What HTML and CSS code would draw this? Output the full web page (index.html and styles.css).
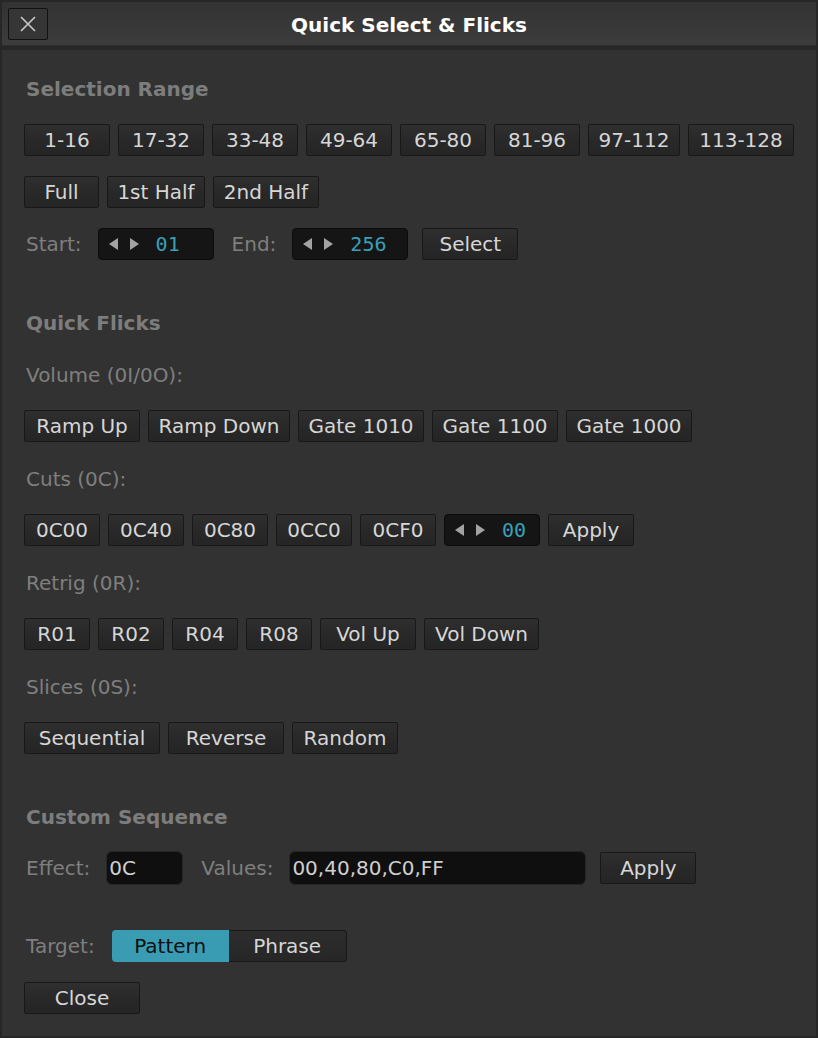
FILE: index.html
```html
<!DOCTYPE html>
<html lang="en">
<head>
    <meta charset="UTF-8">
    <title>Quick Select &amp; Flicks</title>
    <link rel="stylesheet" href="styles.css">
</head>
<body>
    <div class="window">
        <header class="titlebar">
            <button class="close-btn" title="Close">
                <svg width="16" height="16" viewBox="0 0 16 16"><path d="M1 1L15 15M15 1L1 15" stroke="#c8c8c8" stroke-width="1.6" fill="none"/></svg>
            </button>
            <h1>Quick Select &amp; Flicks</h1>
        </header>

        <main class="panel">
            <h2 class="section-title first">Selection Range</h2>
            <div class="row">
                <button class="btn w86">1-16</button>
                <button class="btn w86">17-32</button>
                <button class="btn w86">33-48</button>
                <button class="btn w86">49-64</button>
                <button class="btn w86">65-80</button>
                <button class="btn w86">81-96</button>
                <button class="btn w92">97-112</button>
                <button class="btn w106">113-128</button>
            </div>
            <div class="row">
                <button class="btn w75">Full</button>
                <button class="btn w98">1st Half</button>
                <button class="btn w106">2nd Half</button>
            </div>
            <div class="row form-row">
                <span class="label">Start:</span>
                <div class="spin w116">
                    <span class="arrow left"></span><span class="arrow right"></span>
                    <span class="spin-value">01</span>
                </div>
                <span class="label">End:</span>
                <div class="spin w116">
                    <span class="arrow left"></span><span class="arrow right"></span>
                    <span class="spin-value">256</span>
                </div>
                <button class="btn w96 tight">Select</button>
            </div>

            <h2 class="section-title">Quick Flicks</h2>
            <div class="label sub">Volume (0I/0O):</div>
            <div class="row">
                <button class="btn w116">Ramp Up</button>
                <button class="btn w142">Ramp Down</button>
                <button class="btn w126">Gate 1010</button>
                <button class="btn w126">Gate 1100</button>
                <button class="btn w126">Gate 1000</button>
            </div>
            <div class="label sub">Cuts (0C):</div>
            <div class="row">
                <button class="btn w76">0C00</button>
                <button class="btn w76">0C40</button>
                <button class="btn w76">0C80</button>
                <button class="btn w76">0CC0</button>
                <button class="btn w76">0CF0</button>
                <div class="spin w96">
                    <span class="arrow left"></span><span class="arrow right"></span>
                    <span class="spin-value">00</span>
                </div>
                <button class="btn w86">Apply</button>
            </div>
            <div class="label sub">Retrig (0R):</div>
            <div class="row">
                <button class="btn w66">R01</button>
                <button class="btn w66">R02</button>
                <button class="btn w66">R04</button>
                <button class="btn w66">R08</button>
                <button class="btn w96">Vol Up</button>
                <button class="btn w115">Vol Down</button>
            </div>
            <div class="label sub">Slices (0S):</div>
            <div class="row">
                <button class="btn w136">Sequential</button>
                <button class="btn w116">Reverse</button>
                <button class="btn w106">Random</button>
            </div>

            <h2 class="section-title">Custom Sequence</h2>
            <div class="row form-row custom-row">
                <span class="label">Effect:</span>
                <input class="field w77" type="text" value="0C">
                <span class="label">Values:</span>
                <input class="field w297" type="text" value="00,40,80,C0,FF">
                <button class="btn w96 tight">Apply</button>
            </div>

            <div class="row form-row target-row">
                <span class="label">Target:</span>
                <div class="segmented">
                    <button class="seg active">Pattern</button>
                    <button class="seg">Phrase</button>
                </div>
            </div>
            <div class="row close-row">
                <button class="btn w116">Close</button>
            </div>
        </main>
    </div>
</body>
</html>
```

FILE: styles.css
```css
html, body {
    margin: 0;
    padding: 0;
}
body {
    background-color: #272727;
    font-family: "DejaVu Sans", "Liberation Sans", sans-serif;
    font-size: 20px;
    color: #d4d4d4;
}
.window {
    width: 818px;
    height: 1038px;
    box-sizing: border-box;
    padding: 2px;
    display: flex;
    flex-direction: column;
}
.titlebar {
    height: 43px;
    flex: none;
    display: grid;
    grid-template-columns: 40px 1fr 40px;
    align-items: center;
    padding: 0 6px;
    background: linear-gradient(#333333, #3c3c3c);
    border-bottom: 1px solid #2d2d2d;
    margin-bottom: 4px;
}
.titlebar h1 {
    margin: 0;
    padding-top: 2px;
    font-size: 20px;
    font-weight: bold;
    color: #ffffff;
    text-align: center;
    line-height: 24px;
}
.close-btn {
    width: 40px;
    height: 32px;
    padding: 0;
    background: #363636;
    border: 1px solid #121212;
    border-radius: 2px;
    display: flex;
    align-items: center;
    justify-content: center;
    margin-top: 1px;
}
.panel {
    flex: 1;
    background-color: #323232;
    padding: 0 22px;
    display: flex;
    flex-direction: column;
    align-items: flex-start;
}
.section-title {
    margin: 53px 0 0 0;
    padding-left: 2px;
    font-size: 20px;
    font-weight: bold;
    line-height: 20px;
    color: #7d7d7d;
}
.section-title.first {
    margin-top: 29px;
}
.label {
    padding-left: 2px;
    color: #7f7f7f;
    line-height: 20px;
    white-space: nowrap;
}
.label.sub {
    margin-top: 27px;
}
.section-title + .label.sub {
    margin-top: 32px;
}
.row {
    display: flex;
    align-items: center;
    gap: 8px;
    margin-top: 20px;
}
.section-title + .row,
.label.sub + .row {
    margin-top: 25px;
}
.form-row {
    gap: 16px;
}
.custom-row {
    margin-top: 24px !important;
    height: 34px;
}
.target-row {
    margin-top: 45px;
    gap: 17px;
}
.close-row {
    margin-top: 20px;
}
.tight {
    margin-left: -2px;
}
.btn {
    height: 32px;
    box-sizing: border-box;
    padding: 0 8px;
    font-family: "DejaVu Sans", sans-serif;
    font-size: 20px;
    line-height: 30px;
    color: #d6d6d6;
    background: linear-gradient(#2f2f2f, #282828 55%, #252525);
    border: 1px solid #181818;
    border-radius: 2px;
    white-space: nowrap;
    flex: none;
}
.w66 { width: 66px; }
.w75 { width: 75px; }
.w76 { width: 76px; }
.w86 { width: 86px; }
.w92 { width: 92px; }
.w96 { width: 96px; }
.w98 { width: 98px; }
.w106 { width: 106px; }
.w115 { width: 115px; }
.w116 { width: 116px; }
.w126 { width: 126px; }
.w136 { width: 136px; }
.w142 { width: 142px; }
.w77 { width: 77px; }
.w297 { width: 297px; }
.spin {
    height: 32px;
    box-sizing: border-box;
    background-color: #151515;
    border: 1px solid #0b0b0b;
    border-radius: 4px;
    display: flex;
    align-items: center;
    padding-left: 10px;
    flex: none;
}
.arrow {
    width: 0;
    height: 0;
    border-top: 6px solid transparent;
    border-bottom: 6px solid transparent;
}
.arrow.left {
    border-right: 9px solid #a3a3a3;
}
.arrow.right {
    border-left: 9px solid #a3a3a3;
    margin-left: 12px;
}
.spin-value {
    margin-left: 17px;
    font-family: "DejaVu Sans Mono", monospace;
    font-size: 20px;
    color: #3aa0b8;
}
.field {
    height: 34px;
    box-sizing: border-box;
    padding: 0 2px;
    background-color: #0f0f0f;
    border: 1px solid #262626;
    border-radius: 6px;
    font-family: "DejaVu Sans", sans-serif;
    font-size: 20px;
    color: #cfcfcf;
    outline: none;
    flex: none;
}
.segmented {
    display: flex;
    height: 32px;
}
.seg {
    width: 118px;
    height: 32px;
    box-sizing: border-box;
    padding: 0;
    font-family: "DejaVu Sans", sans-serif;
    font-size: 20px;
    line-height: 30px;
    color: #d6d6d6;
    background: linear-gradient(#2d2d2d, #262626);
    border: 1px solid #181818;
    border-left: none;
    border-radius: 0 4px 4px 0;
}
.seg.active {
    width: 117px;
    background: #3a9cb3;
    color: #101010;
    border: none;
    border-radius: 4px 0 0 4px;
}
```
